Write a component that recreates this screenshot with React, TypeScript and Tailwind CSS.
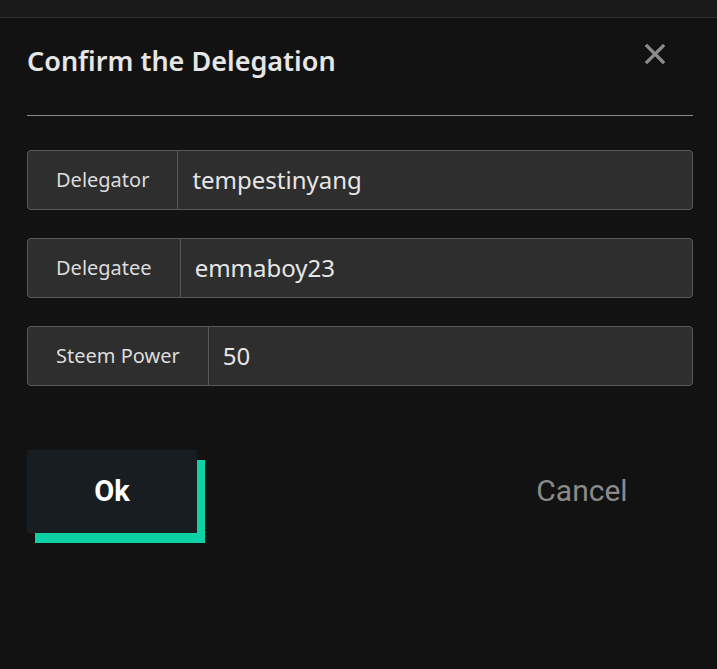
const rows = [
  { label: "Delegator", value: "tempestinyang" },
  { label: "Delegatee", value: "emmaboy23" },
  { label: "Steem Power", value: "50" },
];

export default function App() {
  return (
    <div className="w-[717px] h-[669px] bg-[#121212] overflow-hidden font-['Noto_Sans',sans-serif]">
      <div className="h-[18px] bg-[#1a1a1a] border-b border-[#2f2f2f]" />
      <div className="pl-[27px] pr-[24px]">
        <div className="flex items-start justify-between h-[98px] border-b border-[#8a8a8a]">
          <h2 className="mt-[23px] text-[27px] font-semibold text-[#e6e6e6]">
            Confirm the Delegation
          </h2>
          <button className="mt-[24px] mr-[26px] text-[#8c8c8c]">
            <svg width="24" height="24" viewBox="0 0 24 24" fill="none" stroke="currentColor" strokeWidth="3.2" strokeLinecap="square">
              <path d="M4 4 L20 20 M20 4 L4 20" />
            </svg>
          </button>
        </div>

        <div className="mt-[34px] flex flex-col gap-[28px]">
          {rows.map((r) => (
            <div key={r.label} className="flex h-[60px] rounded-[4px] border border-[#595959] bg-[#2e2e2e] overflow-hidden">
              <div className="flex items-center px-[28px] border-r border-[#595959] text-[20px] text-[#dcdcdc]">
                {r.label}
              </div>
              <div className="flex items-center px-[14px] text-[24px] text-[#e6e6e6]">
                {r.value}
              </div>
            </div>
          ))}
        </div>

        <div className="mt-[64px] flex items-start">
          <button className="w-[170px] h-[83px] bg-[#181d22] shadow-[8px_10px_0_#0fd1a6] text-white text-[29px] font-bold font-['Roboto',sans-serif]">
            Ok
          </button>
          <button className="ml-[325px] h-[80px] w-[120px] text-[30px] text-[#8a8a8a] font-['Roboto',sans-serif]">
            Cancel
          </button>
        </div>
      </div>
    </div>
  );
}
